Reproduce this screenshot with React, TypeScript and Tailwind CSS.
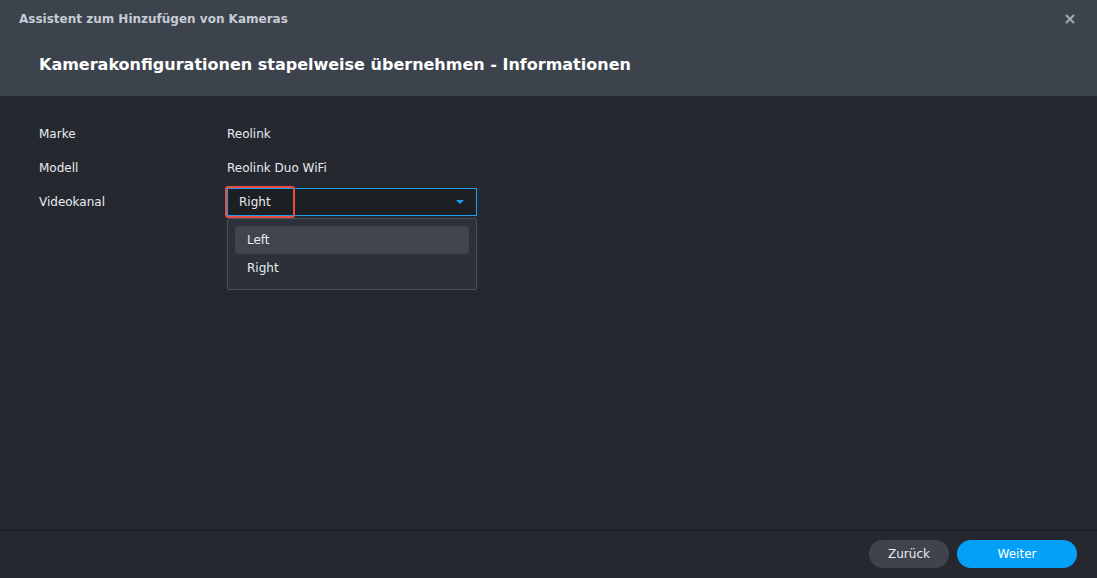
import { X } from "lucide-react";

export default function App() {
  return (
    <div
      className="flex h-[578px] w-[1097px] flex-col overflow-hidden bg-[#25292f] text-[#e8ebef]"
      style={{ fontFamily: '"DejaVu Sans", Verdana, sans-serif' }}
    >
      <header className="flex h-[96px] flex-col bg-[#3d434d] px-[19px]">
        <div className="flex h-[38px] items-center justify-between">
          <span className="text-[12px] font-bold text-[#c6ccd5]">Assistent zum Hinzufügen von Kameras</span>
          <X className="mr-[1px] h-[14px] w-[14px] text-[#a3a9b2]" strokeWidth={3.5} />
        </div>
        <h1 className="mt-[15px] pl-[20px] text-[16px] font-bold text-white">
          Kamerakonfigurationen stapelweise übernehmen - Informationen
        </h1>
      </header>

      <main className="flex-1 px-[39px] pt-[29px] text-[12px]">
        <div className="grid grid-cols-[188px_250px] gap-y-[16px] leading-[18px]">
          <span>Marke</span>
          <span>Reolink</span>
          <span>Modell</span>
          <span>Reolink Duo WiFi</span>
          <span className="self-start">Videokanal</span>
          <div className="relative -mt-[5px]">
            <div className="flex h-[28px] items-center justify-between border border-[#1a9ff0] bg-[#1c1f24] pl-[11px] pr-[12px]">
              <span>Right</span>
              <span className="h-0 w-0 border-x-[4px] border-t-[4px] border-x-transparent border-t-[#1a9ff0]" />
            </div>
            <div className="absolute left-[-2px] top-[-2px] h-[32px] w-[70px] rounded-[3px] border-2 border-[#ea4a40]" />
            <div className="absolute left-0 top-[30px] w-[250px] rounded-[2px] border border-[#4b5058] bg-[#2c3038] px-[7px] py-[7px]">
              <div className="flex h-[28px] items-center rounded-[2px] bg-[#3f444e] px-[12px]">Left</div>
              <div className="flex h-[28px] items-center px-[12px]">Right</div>
            </div>
          </div>
        </div>
      </main>

      <footer className="flex h-[48px] items-center justify-end gap-[8px] border-t border-[#181b1f] px-[20px] pb-[1px]">
        <button className="h-[28px] w-[80px] rounded-full bg-[#3e434d] text-[12px] text-[#e8ebef]">Zurück</button>
        <button className="h-[28px] w-[120px] rounded-full bg-[#04a0f8] text-[12px] text-white">Weiter</button>
      </footer>
    </div>
  );
}
